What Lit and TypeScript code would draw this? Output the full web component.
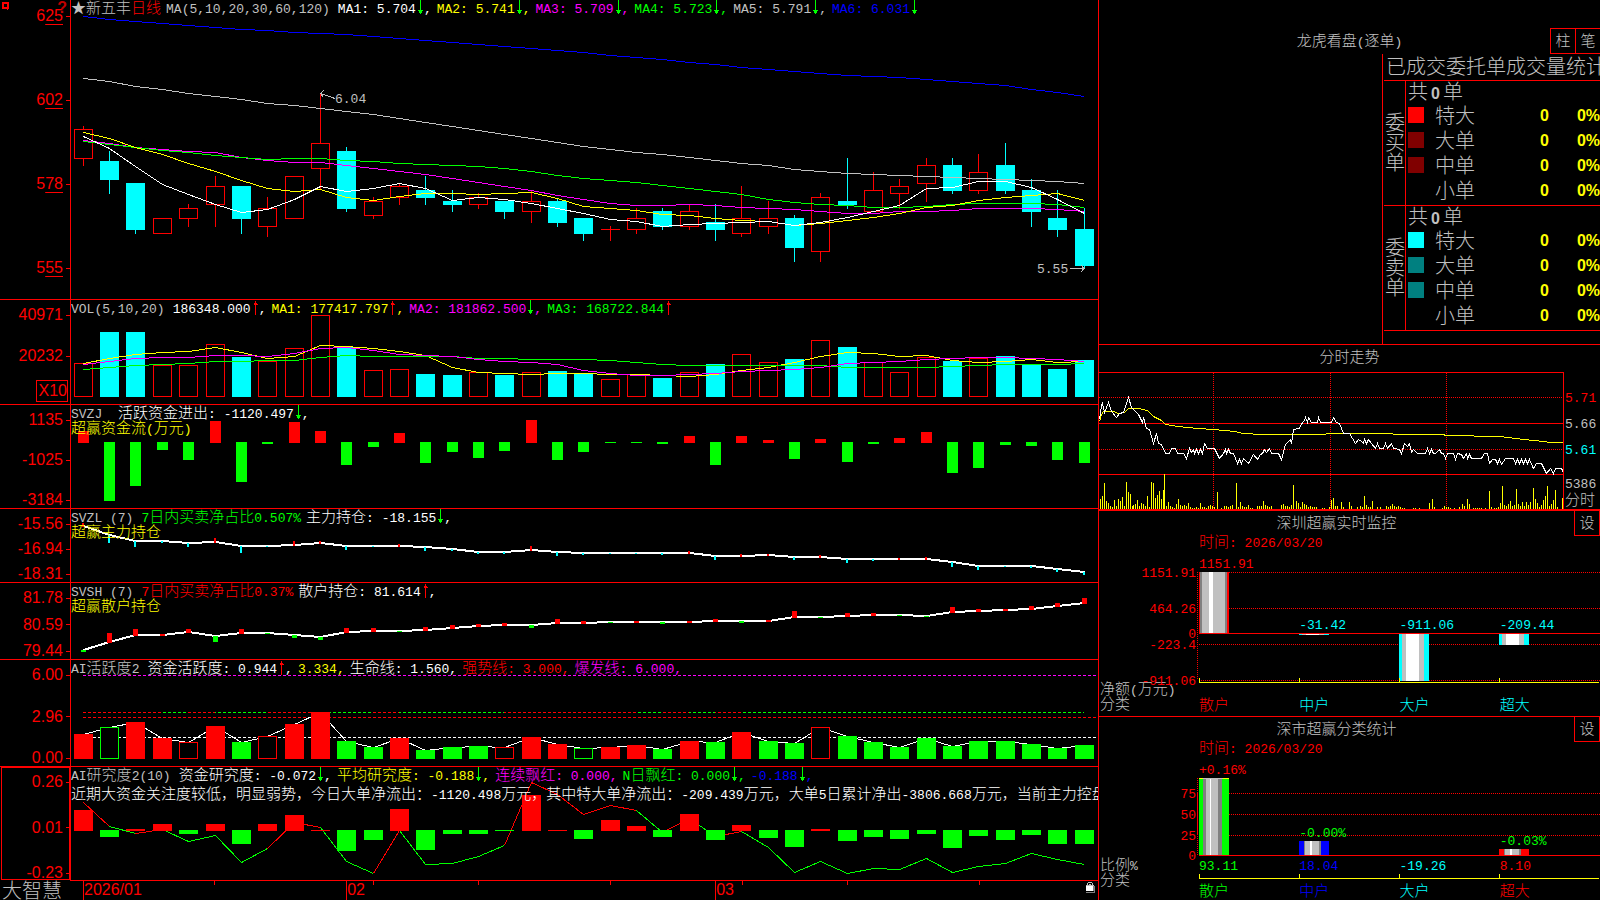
import { LitElement, html, svg, css, nothing } from "lit";
import { customElement, property } from "lit/decorators.js";
import { styleMap } from "lit/directives/style-map.js";

const RED = "#ff0000";
const GREEN = "#00ff00";
const CYAN = "#00ffff";
const YELLOW = "#ffff00";
const MAGENTA = "#ff00ff";
const BLUE = "#0000ff";
const GREY = "#c0c0c0";
const DARK = "#808080";
const WHITE = "#ffffff";

/* Main plots share one coordinate space: x 71..1098, y measured from the top of the window. */
const X0 = 71;
const PLOT_W = 1027;
const cx = (i: number) => Math.floor(83.3 + 26.34 * i);

type Row = { text: string; color: string; arrow?: "up" | "down"; end?: boolean };

/* colour, body top, body bottom, wick top, wick bottom */
const CANDLES: [string, number, number, number, number][] = [
  ["r", 129, 158, 126, 166], ["c", 161, 180, 151, 194], ["c", 183, 230, 183, 234], ["r", 218, 233, 218, 233],
  ["r", 208, 218, 204, 227], ["r", 186, 204, 176, 227], ["c", 186, 219, 186, 234], ["r", 208, 226, 197, 237],
  ["r", 176, 218, 176, 218], ["r", 143, 168, 93, 190], ["c", 151, 209, 147, 212], ["r", 201, 215, 197, 219],
  ["r", 186, 197, 183, 205], ["c", 190, 198, 176, 205], ["c", 201, 205, 190, 212], ["r", 197, 204, 193, 209],
  ["c", 201, 212, 201, 219], ["r", 201, 211, 190, 223], ["c", 201, 223, 198, 227], ["c", 218, 234, 218, 241],
  ["r", 229, 229, 226, 241], ["r", 218, 229, 208, 234], ["c", 211, 227, 208, 230], ["r", 211, 226, 204, 230],
  ["c", 222, 230, 204, 241], ["r", 218, 233, 186, 237], ["r", 218, 226, 201, 234], ["c", 218, 248, 215, 262],
  ["r", 197, 251, 193, 262], ["c", 201, 205, 158, 209], ["r", 190, 211, 172, 211], ["r", 186, 193, 179, 209],
  ["r", 165, 183, 158, 202], ["c", 165, 191, 158, 194], ["r", 172, 190, 154, 194], ["c", 165, 191, 143, 194],
  ["c", 190, 212, 179, 227], ["c", 218, 230, 190, 237], ["c", 229, 266, 208, 268],
];

const MA1 = [136,148,166,184,194,204,212,209,199,186,191,188,183,188,200,197,199,203,208,213,219,221,226,224,223,222,221,225,222,217,211,205,188,187,181,181,187,199,213];
const MA2 = [132,138,147,154,163,171,180,188,191,189,197,200,196,193,193,194,193,192,198,206,208,210,214,215,218,220,221,225,223,220,217,213,207,205,200,197,195,193,200];
const MA3 = [140,143,147,149,151,152,157,160,162,162,165,168,171,174,178,182,186,190,195,199,203,205,205,204,205,207,208,209,211,213,213,211,211,210,208,208,208,209,211];
const MA4 = [141,144,147,150,152,155,157,159,158,158,160,161,163,164,165,166,168,171,175,178,180,182,185,188,191,194,199,202,204,205,207,207,206,204,203,203,203,204,207];
const MA5 = [78,81,86,89,93,96,99,103,105,108,111,114,118,122,126,130,134,138,142,146,149,152,154,157,160,163,165,169,171,173,174,175,176,177,178,179,180,181,183];
const MA6 = [16,19,21,23,25,27,29,30,32,33,34,36,38,40,42,44,46,48,50,52,55,57,59,62,64,67,69,71,73,75,76,77,79,81,83,85,89,92,96];

const VOL = [363,332,332,365,365,344,357,361,348,315,347,370,369,374,375,372,375,372,371,374,379,374,378,372,364,354,362,359,340,347,362,372,357,361,358,356,364,369,360];
const VMA1 = [363,358,354,352,351,347,352,358,356,345,346,348,351,355,367,372,373,374,373,373,374,374,375,376,374,370,367,362,356,352,353,356,355,360,362,361,359,362,361];
const VMA2 = [364,361,358,357,357,355,355,356,353,348,347,350,354,355,356,359,361,362,364,370,373,375,375,374,373,371,370,369,367,363,362,361,359,358,357,357,358,359,361];
const VMA3 = [369,367,365,364,363,361,361,360,360,357,355,356,356,356,356,358,358,359,359,359,360,362,364,365,365,365,365,365,365,367,367,367,367,366,365,364,364,364,363];

/* positive reaches up from the zero line, negative reaches down */
const FLOW = [12,-59,-44,-8,-18,22,-40,-2,21,12,-23,-5,10,-21,-10,-16,-9,23,-18,-10,-1,-1,-2,7,-23,7,3,-17,4,-20,-2,5,11,-31,-26,-3,-4,-18,-21];

const MAIN_POS = [526,535,541,541,543,542,546,546,545,543,546,546,546,547,549,552,552,550,552,553,553,553,553,553,556,556,555,557,557,559,559,559,559,562,566,566,566,569,572];
const MAIN_TICK = [3,-8,-6,-2,-4,4,-7,-1,4,2,-4,-1,2,-4,-2,-2,-2,4,-4,-2,-1,-1,-2,2,-4,2,1,-3,2,-4,-2,1,2,-5,-4,-1,-2,-3,-3];

const RETAIL_POS = [650,642,635,635,632,636,633,633,635,637,632,631,631,630,628,626,625,625,623,623,622,622,622,622,621,621,621,617,617,616,615,615,616,612,611,610,609,606,603];
const RETAIL_TICK = [-2,9,6,1,3,-6,4,-1,-3,-3,4,3,-1,3,3,2,2,-3,4,2,-1,1,-2,1,2,-2,1,6,-1,3,2,-1,-1,5,2,1,3,3,5];

const ACTIVE = [734,727,722,738,742,726,742,736,724,712,741,747,738,750,747,746,747,737,744,748,747,745,749,741,742,732,741,743,727,736,742,747,738,746,741,741,744,748,745];
const ACTIVE_KIND = "RgRRrRGrRRGGRGGGrRRgRRGRGRGGrGGGGGGGGGG";

const STUDY = [21,-7,2,7,-4,7,-14,7,16,1,-21,-10,22,-20,-4,-4,-1,36,1,-9,11,5,-7,17,-10,6,-8,-17,2,-11,-7,-9,-4,-18,-6,-10,-5,-14,-14];
const STUDY_LINE = [802,826,833,829,841,835,862,848,822,827,861,873,830,864,863,856,845,782,794,814,805,810,832,818,836,831,847,872,861,873,868,869,858,872,866,863,853,859,864];
const STUDY_UP = new Set([0, 2, 7, 8, 11, 16, 17, 18, 19, 20, 22, 24]);

/* Intraday panel, in units of a third of a pixel from the panel's origin. */
const AVG_LINE = "27,260 32,240 38,232 70,232 85,236 103,235 115,223 145,223 172,228 190,246 213,258 225,270 260,275 320,283 370,286 435,290 455,298 520,300 700,300 715,298 905,298 910,300 1060,300 1065,304 1148,304 1152,307 1230,307 1300,316 1362,320 1378,325 1420,325";
const PRICE_LINE = "27,255 32,212 37,207 43,235 55,205 62,232 78,250 88,236 100,234 115,190 123,218 135,232 145,240 155,264 160,250 167,282 178,284 190,328 197,298 203,326 213,330 225,358 237,356 243,343 254,343 262,357 278,358 288,373 298,343 304,355 308,346 313,358 319,345 325,358 330,345 336,356 343,328 352,342 372,343 388,373 398,356 404,346 408,358 414,345 420,357 430,356 440,388 446,374 452,386 460,373 474,388 488,360 502,374 510,360 515,357 522,344 528,355 536,343 544,357 564,358 574,374 584,330 600,314 604,326 610,284 626,283 632,266 638,264 644,250 650,263 655,250 662,265 680,265 685,250 691,265 724,265 730,250 738,265 748,266 760,298 778,298 796,328 804,314 812,322 818,328 823,314 829,328 835,314 843,328 854,342 860,328 866,343 878,343 884,328 892,343 902,328 908,342 928,344 934,358 942,328 952,336 957,326 964,355 970,345 980,357 1004,357 1010,343 1016,357 1022,345 1028,358 1036,358 1046,345 1052,356 1058,358 1064,372 1070,358 1088,358 1094,374 1102,358 1112,360 1118,373 1128,358 1132,372 1138,360 1144,373 1174,373 1182,358 1192,358 1198,387 1205,374 1216,374 1222,388 1228,374 1234,390 1244,373 1268,373 1274,387 1280,374 1286,388 1292,374 1298,388 1304,374 1310,388 1318,374 1330,402 1338,388 1354,388 1368,418 1380,403 1390,418 1396,403 1414,403 1420,415";
const scalePoints = (s: string) =>
  s.split(" ").map((p) => {
    const [x, y] = p.split(",").map(Number);
    return `${Math.round(x / 3) + 1090.5},${Math.round(y / 3) + 334.5}`;
  }).join(" ");

/* minute offset in pixels, bar height */
const MINUTE_VOL: [number, number][] = [
  [1,10],[3,13],[5,26],[7,8],[9,6],[11,3],[13,2],[15,9],[17,3],[19,10],[21,8],[23,12],[25,3],[27,27],[29,17],[31,15],[33,3],[34,4],[36,5],[38,9],[40,3],[42,6],[44,5],[46,3],[48,13],[50,2],[52,27],[54,26],[56,11],[58,14],[60,18],[62,10],[64,19],[65,35],[67,3],[69,7],[71,3],[73,2],[75,1],[77,5],[79,10],[81,4],[83,3],[85,4],[87,3],[89,6],[91,2],[93,1],[95,1],[97,2],[99,1],[101,6],[103,2],[105,2],[107,1],[109,3],[111,4],[113,3],[115,2],[118,17],[122,1],[125,3],[127,3],[129,2],[131,3],[133,4],[137,26],[139,2],[141,7],[143,3],[145,2],[147,2],[149,4],[151,1],[153,1],[158,3],[160,3],[162,3],[164,8],[166,4],[168,3],[170,2],[172,3],[182,4],[184,5],[186,3],[188,3],[190,2],[192,4],[194,24],[197,8],[199,6],[201,2],[203,7],[205,5],[207,4],[209,2],[211,3],[213,2],[215,2],[217,2],[223,1],[225,1],[230,2],[232,9],[234,11],[236,3],[238,3],[242,7],[244,2],[250,7],[252,3],[258,2],[261,3],[263,2],[265,13],[267,4],[269,2],[271,2],[273,8],[278,2],[281,2],[287,3],[289,2],[291,3],[293,5],[295,3],[297,2],[299,3],[301,2],[303,1],[305,1],[314,1],[316,1],[320,1],[330,6],[333,10],[335,2],[343,1],[345,3],[347,2],[349,2],[351,1],[355,1],[360,2],[363,5],[365,3],[368,10],[370,5],[374,1],[376,1],[378,1],[380,1],[382,1],[386,1],[390,18],[392,2],[395,1],[397,1],[399,2],[401,6],[403,23],[405,4],[407,3],[409,5],[411,8],[413,3],[415,4],[417,20],[419,5],[421,3],[423,7],[425,3],[427,7],[429,4],[431,7],[434,21],[436,10],[438,6],[440,2],[442,4],[444,9],[446,13],[448,23],[450,3],[452,5],[454,9],[456,19],[458,2],[463,11],
];

/* Chinese runs are set two pixels larger than the monospaced Latin ones. */
const mixed = (s: string) =>
  s.split(/([\u2605\u3000-\u9fff\uff00-\uffef]+)/).filter(Boolean).map((part) =>
    /[\u2605\u3000-\u9fff\uff00-\uffef]/.test(part) ? html`<span class="han">${part}</span>` : part);

const arrow = (dir: "up" | "down") => html`<svg class="arrow" viewBox="0 0 8 15" shape-rendering="crispEdges" aria-hidden="true">
  ${dir === "down"
    ? svg`<path fill="${GREEN}" d="M4 0h1v14h-1zM2 10h5v1h-5zM3 11h3v1h-3zM3 12h3v1h-3z"/>`
    : svg`<path fill="${RED}" d="M4 1h1v14h-1zM2 5h1v-1h1v-1h2v1h1v1zM3 3h3v1h-3z"/>`}
</svg>`;

const line = (ys: number[], color: string, w = 1) => svg`<polyline fill="none" stroke="${color}" stroke-width="${w}"
  vector-effect="non-scaling-stroke" points="${ys.map((y, i) => `${cx(i) + 0.5},${y + (w === 1 ? 0.5 : 0)}`).join(" ")}"/>`;

const box = (x: number, y: number, w: number, h: number, color: string) =>
  svg`<rect x="${x}" y="${y}" width="${w}" height="${h}" fill="${color}"/>`;
const frame = (x: number, y: number, w: number, h: number, color: string) =>
  svg`<rect x="${x + 0.5}" y="${y + 0.5}" width="${w - 1}" height="${Math.max(h - 1, 0.01)}" fill="#000" stroke="${color}"/>`;
const dashed = (x1: number, x2: number, y: number, color: string) =>
  svg`<line x1="${x1}" x2="${x2}" y1="${y + 0.5}" y2="${y + 0.5}" stroke="${color}" stroke-dasharray="3 2" stroke-dashoffset="${(x1 - 83) % 5}"/>`;
const dotted = (x1: number, y1: number, x2: number, y2: number) =>
  svg`<line x1="${x1}" y1="${y1}" x2="${x2}" y2="${y2}" stroke="${RED}" stroke-dasharray="1 1"/>`;

@customElement("app-root")
export class AppRoot extends LitElement {
  @property() date = "2026/03/20";

  static styles = css`
    :host {
      display: block;
      height: 100vh;
      overflow: hidden;
      background: #000;
      color: #c0c0c0;
      font: 13px/15px "Liberation Mono", "Noto Sans CJK SC", monospace;
    }
    * { box-sizing: border-box; }
    h2, p { margin: 0; font: inherit; }
    .han { font-family: "Noto Sans CJK SC", sans-serif; font-size: 15px; font-weight: 300; line-height: 0; }
    .big { font-family: "Noto Sans CJK SC", sans-serif; font-size: 20px; font-weight: 300; }
    .desk { display: grid; grid-template-columns: minmax(0, 1099fr) minmax(0, 501fr); grid-template-rows: minmax(0, 1fr); height: 100%; }

    .main {
      display: grid;
      grid-template-rows: 300fr 105fr 104fr 74fr 77fr 107fr 114fr 19px;
      min-height: 0;
      border-right: 1px solid #f00;
    }
    .pane {
      display: grid;
      grid-template-columns: 71px minmax(0, 1fr);
      grid-template-rows: minmax(0, 1fr);
      min-height: 0;
      border-bottom: 1px solid #f00;
    }
    .pane.last { border-bottom: 0; }
    .axis {
      position: relative;
      display: flex;
      flex-direction: column;
      justify-content: space-between;
      align-items: flex-end;
      padding-top: 7px;
      border-right: 1px solid #f00;
      color: #f00;
      font: 16px/16px "Liberation Sans", sans-serif;
    }
    .axis.price { padding-top: 8px; padding-bottom: 23px; }
    .axis.volume { justify-content: flex-start; padding-bottom: 2px; }
    .axis.volume .mark:first-child { margin-bottom: 25px; }
    .axis.chosen::before { content: ""; position: absolute; inset: 0 0 1px 1px; border: 1px solid #f00; }
    .mark { display: flex; align-items: center; }
    .mark::after { content: ""; width: 4px; height: 1px; margin-left: 3px; background: #f00; }
    .cents { text-decoration: underline 1px; text-underline-offset: 3px; }
    .unit { margin: auto 2px 0 0; padding: 2px 0 2px 2px; border: 1px solid #f00; }
    .corner { position: absolute; left: 2px; top: 2px; width: 8px; height: 8px; }
    .help { position: absolute; right: 3px; top: 0; color: #c00000; font-weight: bold; }

    .plot { position: relative; min-width: 0; overflow: hidden; }
    .plot > svg { position: absolute; inset: 0; width: 100%; height: 100%; }
    .last .plot { border-bottom: 1px solid #f00; }
    .legend { position: relative; display: flex; align-items: flex-start; gap: 5px; height: 15px; line-height: 19px; white-space: pre; }
    .entry { display: flex; align-items: flex-start; }
    .name { margin-right: 3px; }
    .arrow { width: 8px; height: 15px; flex: none; }
    .caption { position: relative; line-height: 19px; white-space: nowrap; }
    .note { position: relative; margin-top: 4px; line-height: 19px; color: #fff; white-space: nowrap; }
    .tag { position: absolute; }

    .foot { display: grid; grid-template-columns: 71px minmax(0, 1fr); }
    .brand { padding-left: 2px; line-height: 18px; white-space: nowrap; }
    .months { position: relative; display: flex; padding-left: 12px; color: #f00; font: 16px/18px "Liberation Sans", sans-serif; }
    .months > svg { position: absolute; inset: 0; width: 100%; height: 4px; }
    .month { flex-basis: 0; border-left: 1px solid #f00; }
    .lock { position: absolute; right: 3px; top: 1px; width: 10px; height: 12px; padding: 0; border: 0; background: none; display: flex; }

    .side { display: grid; grid-template-rows: 345fr 166fr 206fr 183fr; min-height: 0; min-width: 0; }
    .side > section { position: relative; min-height: 0; min-width: 0; overflow: hidden; }
    button { color: inherit; background: #000; border: 1px solid #f00; padding: 3px 0 0; font: inherit; cursor: pointer; }
    .orders { border-bottom: 1px solid #f00; display: flex; flex-direction: column; }
    .bar { display: grid; grid-template-columns: 50px 1fr 50px; padding-top: 28px; align-items: center; text-align: center; }
    .bar h2 { padding-top: 3px; }
    .pair { display: flex; }
    .pair button { width: 26px; height: 26px; margin-right: -1px; flex: none; }
    .book { flex: 1; margin-left: 283px; border-left: 1px solid #f00; padding-left: 1px; white-space: nowrap; }
    .book h2 { height: 26px; line-height: 24px; padding-left: 2px; overflow: hidden; }
    .half { display: grid; grid-template-columns: 22px minmax(0, 1fr); border-top: 1px solid #f00; }
    .half:last-child { border-bottom: 1px solid #f00; }
    .way { display: flex; align-items: center; padding-left: 1px; padding-bottom: 3px; border-right: 1px solid #f00; line-height: 20px; white-space: normal; }
    table { width: 100%; border-collapse: collapse; }
    td, th { height: 25px; padding: 0 0 5px; line-height: 20px; text-align: left; font-weight: inherit; }
    tr:first-child th { height: 24px; padding: 0 0 4px 2px; }
    .total { font: bold 16px/0 "Liberation Sans", sans-serif; padding: 0 3px; }
    .swatch { display: block; width: 16px; height: 16px; margin-left: 2px; }
    .c1 { width: 29px; }
    .c3, .c4 { padding-bottom: 3px; text-align: right; color: #ff0; font: bold 16px/20px "Liberation Sans", sans-serif; }
    .c4 { width: 51px; }

    .intraday { display: grid; grid-template-rows: 27px minmax(0, 1fr); border-bottom: 2px solid #f00; text-align: center; }
    .intraday h2 { line-height: 23px; padding-top: 2px; }
    .tape { display: grid; grid-template-columns: minmax(0, 1fr) 36px; grid-template-rows: minmax(0, 1fr); min-height: 0; text-align: left; }
    .tape .plot { border: 1px solid #f00; border-width: 1px 1px 0 0; }
    .quotes { display: flex; flex-direction: column; padding: 19px 0 0 1px; gap: 11px; }
    .quotes > :nth-child(4) { margin-top: 8px; }
    .quotes > :nth-child(5) { margin-top: -9px; }

    .stats { display: grid; grid-template-columns: 100px minmax(0, 1fr); }
    .stats.first { grid-template-rows: 25px 18px minmax(0, 1fr) 34px; border-bottom: 1px solid #f00; }
    .stats.second { grid-template-rows: 25px 18px minmax(0, 1fr) 45px; }
    .cap { grid-column: 1 / -1; display: grid; grid-template-columns: minmax(0, 1fr) 26px; text-align: center; }
    .cap h2 { line-height: 23px; padding-top: 2px; }
    .cap button { height: 25px; border-top: 0; }
    .when { grid-column: 2; color: #f00; line-height: 16px; }
    .scale, .field { position: relative; }
    .field > svg { position: absolute; inset: 0; width: 100%; height: 100%; }
    .scale span { position: absolute; right: 3px; transform: translateY(-50%); color: #f00; }
    .value { position: absolute; white-space: nowrap; }
    .cats { display: grid; grid-template-columns: repeat(4, minmax(0, 1fr)); align-content: end; row-gap: 11px; }
    .stats.first .cats { padding-bottom: 2px; }
    .ends { display: flex; flex-direction: column; justify-content: space-between; padding: 1px 0 7px 1px; white-space: nowrap; }
    .stats.second .ends { padding: 4px 0 12px 1px; }
  `;

  private legend(name: string, rows: Row[]) {
    return html`<div class="legend">
      <span class="name">${mixed(name)}</span>
      ${rows.map((r) => html`<span class="entry" style=${styleMap({ color: r.color })}><span>${mixed(r.text)}</span>${r.arrow ? html`${arrow(r.arrow)}${r.end ? nothing : ","}` : nothing}</span>`)}
    </div>`;
  }

  private canvas(y: number, h: number, content: unknown) {
    return html`<svg viewBox="${X0} ${y} ${PLOT_W} ${h}" preserveAspectRatio="none" shape-rendering="crispEdges" aria-hidden="true">${content}</svg>`;
  }

  private axis(labels: string[], extra = "") {
    return html`<div class="axis ${extra}">${labels.map((l) => html`<span class="mark">${l}</span>`)}</div>`;
  }

  private pricePane() {
    return html`<section class="pane">
      <div class="axis price">
        ${["625", "602", "578", "555"].map((l) => html`<span class="mark"><span>${l[0]}<span class="cents">${l.slice(1)}</span></span></span>`)}
        <svg class="corner" viewBox="0 0 8 8" shape-rendering="crispEdges" aria-hidden="true"><path fill="${RED}" fill-rule="evenodd" d="M0 0h7v7h-1v1h-1v-1h-5zM2 2v3h3v-3z"/></svg>
        <span class="help">?</span>
      </div>
      <div class="plot">
        ${this.canvas(0, 299, svg`
          ${CANDLES.map(([k, t, b, wt, wb], i) => {
            const x = cx(i), c = k === "r" ? RED : CYAN;
            if (k === "c") return svg`${box(x, wt, 1, wb - wt, c)}${box(x - 9, t, 19, b - t, c)}`;
            if (t === b) return svg`${box(x, wt, 1, wb - wt, c)}${box(x - 9, t, 19, 1, c)}`;
            return svg`${box(x, wt, 1, wb - wt, c)}${frame(x - 9, t, 19, b - t + 1, c)}`;
          })}
          ${line(MA6, BLUE)}${line(MA5, GREY)}${line(MA3, MAGENTA)}${line(MA4, GREEN)}${line(MA2, YELLOW)}${line(MA1, WHITE)}
          <path fill="none" stroke="${GREY}" d="M335 98.5L320.5 93.5L324 90M320.5 93.5L323 97M1070 268.5H1083M1081 265L1084 268.5L1081 272"/>
        `)}
        <div class="legend">
          <span>${mixed("★新五丰")}<span style=${styleMap({ color: RED })}>${mixed("日线")}</span></span>
          <span class="name">MA(5,10,20,30,60,120)</span>
          ${([["MA1: 5.704", WHITE], ["MA2: 5.741", YELLOW], ["MA3: 5.709", MAGENTA], ["MA4: 5.723", GREEN], ["MA5: 5.791", GREY]] as const).map(
            ([t, c]) => html`<span class="entry" style=${styleMap({ color: c })}>${t}${arrow("down")},</span>`)}
          <span class="entry" style=${styleMap({ color: BLUE })}>MA6: 6.031${arrow("down")}</span>
        </div>
        <span class="tag" style=${styleMap({ left: `${(264 / PLOT_W) * 100}%`, top: `${(92 / 299) * 100}%` })}>6.04</span>
        <span class="tag" style=${styleMap({ left: `${(966 / PLOT_W) * 100}%`, top: `${(262 / 299) * 100}%` })}>5.55</span>
      </div>
    </section>`;
  }

  private volumePane() {
    return html`<section class="pane">
      <div class="axis volume"><span class="mark">40971</span><span class="mark">20232</span><span class="unit">X10</span></div>
      <div class="plot">
        ${this.canvas(300, 104, svg`
          ${VOL.map((t, i) => (CANDLES[i][0] === "c" ? box(cx(i) - 9, t, 19, 397 - t, CYAN) : frame(cx(i) - 9, t, 19, 397 - t, RED)))}
          ${line(VMA1, YELLOW)}${line(VMA3, GREEN)}${line(VMA2, MAGENTA)}
        `)}
        ${this.legend("VOL(5,10,20)", [
          { text: "186348.000", color: WHITE, arrow: "up" },
          { text: "MA1: 177417.797", color: YELLOW, arrow: "up" },
          { text: "MA2: 181862.500", color: MAGENTA, arrow: "down" },
          { text: "MA3: 168722.844", color: GREEN, arrow: "up", end: true },
        ])}
      </div>
    </section>`;
  }

  private flowPane() {
    return html`<section class="pane">
      ${this.axis(["1135", "-1025", "-3184"])}
      <div class="plot">
        ${this.canvas(405, 103, svg`${FLOW.map((v, i) => (v > 0 ? box(cx(i) - 5, 443 - v, 11, v, RED) : box(cx(i) - 5, 442, 11, -v, GREEN)))}`)}
        ${this.legend("SVZJ ", [{ text: "活跃资金进出: -1120.497", color: WHITE, arrow: "down" }])}
        <p class="caption" style=${styleMap({ color: YELLOW })}>${mixed("超赢资金流(万元)")}</p>
      </div>
    </section>`;
  }

  private holdingPane(opts: { y: number; h: number; labels: string[]; name: string; caption: string; pos: number[]; tick: number[]; w: number; down: string; rows: Row[] }) {
    return html`<section class="pane">
      ${this.axis(opts.labels)}
      <div class="plot">
        ${this.canvas(opts.y, opts.h, svg`
          ${line(opts.pos, WHITE, 2)}
          ${opts.tick.map((v, i) => {
            const x = cx(i) - (opts.w >> 1), y = opts.pos[i];
            return v > 0 ? box(x, y - v, opts.w, v + 1, RED) : box(x, y, opts.w, -v, opts.down);
          })}
        `)}
        ${this.legend(opts.name, opts.rows)}
        <p class="caption" style=${styleMap({ color: YELLOW })}>${mixed(opts.caption)}</p>
      </div>
    </section>`;
  }

  private activityPane() {
    const greens: [number, number][] = [[3, 4], [5, 7], [9, 11], [12, 16], [21, 22], [23, 24], [25, 38]];
    const reds: [number, number][] = [[0, 3], [4, 5], [7, 9], [11, 12], [16, 21], [22, 23], [24, 25]];
    return html`<section class="pane">
      ${this.axis(["6.00", "2.96", "0.00"])}
      <div class="plot">
        ${this.canvas(660, 106, svg`
          ${dashed(83, 1098, 675, MAGENTA)}${dashed(83, 1098, 717, RED)}${dashed(83, 1098, 737, WHITE)}
          ${reds.map(([a, b]) => dashed(cx(a), cx(b), 712, RED))}${greens.map(([a, b]) => dashed(cx(a), cx(b), 712, GREEN))}
          ${line(ACTIVE, WHITE)}
          ${ACTIVE.map((t, i) => {
            const k = ACTIVE_KIND[i], c = k.toLowerCase() === "r" ? RED : GREEN;
            return k === k.toLowerCase() ? frame(cx(i) - 9, t, 19, 759 - t, c) : box(cx(i) - 9, t, 19, 759 - t, c);
          })}
        `)}
        ${this.legend("AI活跃度2", [
          { text: "资金活跃度: 0.944", color: WHITE, arrow: "up" },
          { text: "3.334,", color: YELLOW },
          { text: "生命线: 1.560,", color: WHITE },
          { text: "强势线: 3.000,", color: RED },
          { text: "爆发线: 6.000,", color: MAGENTA },
        ])}
      </div>
    </section>`;
  }

  private studyPane() {
    return html`<section class="pane last">
      ${this.axis(["0.26", "0.01", "-0.23"], "chosen")}
      <div class="plot">
        ${this.canvas(767, 113, svg`
          ${STUDY_LINE.slice(1).map((y, i) => svg`<line x1="${cx(i) + 0.5}" y1="${STUDY_LINE[i] + 0.5}" x2="${cx(i + 1) + 0.5}" y2="${y + 0.5}" stroke="${STUDY_UP.has(i) ? RED : GREEN}"/>`)}
          ${STUDY.map((v, i) => (v > 0 ? box(cx(i) - 9, 831 - v, 19, v, RED) : box(cx(i) - 9, 830, 19, -v, GREEN)))}
        `)}
        ${this.legend("AI研究度2(10)", [
          { text: "资金研究度: -0.072", color: WHITE, arrow: "down" },
          { text: "平均研究度: -0.188", color: YELLOW, arrow: "down" },
          { text: "连续飘红: 0.000,", color: MAGENTA },
          { text: "N日飘红: 0.000", color: GREEN, arrow: "down" },
          { text: "-0.188", color: BLUE, arrow: "down" },
        ])}
        <p class="note">${mixed("近期大资金关注度较低，明显弱势，今日大单净流出：-1120.498万元，其中特大单净流出：-209.439万元，大单5日累计净出-3806.668万元，当前主力控盘")}</p>
      </div>
    </section>`;
  }

  private footer() {
    return html`<footer class="foot">
      <span class="brand big">大智慧</span>
      <div class="months">
        <svg viewBox="${X0} 0 ${PLOT_W} 4" preserveAspectRatio="none" shape-rendering="crispEdges" aria-hidden="true">
          ${[214, 373, 478, 610, 742, 847, 979].map((x) => box(x, 0, 1, 4, RED))}
        </svg>
        ${([["2026/01", 263], ["02", 369], ["03", 383]] as const).map(([m, w]) => html`<span class="month" style=${styleMap({ flexGrow: w })}>${m}</span>`)}
        <button class="lock" aria-label="锁定"><svg viewBox="0 0 10 12" width="10" height="12" shape-rendering="crispEdges">
          <path fill="${GREY}" d="M3 0h4v1h-4zM2 1h1v2h-1zM7 1h1v2h-1zM4 2h2v1h-2zM1 3h8v1h-8z"/><path fill="${WHITE}" d="M1 4h7v5h-7z"/><path fill="${DARK}" d="M8 4h2v7h-9v-1h8v-1h-1z"/>
        </svg></button>
      </div>
    </footer>`;
  }

  private half(way: string, swatches: string[]) {
    return html`<div class="half">
      <div class="way big">${way}</div>
      <table>
        <tbody>
          <tr><th colspan="4" class="big">共<span class="total">0</span>单</th></tr>
          ${["特大", "大单", "中单", "小单"].map((n, i) => html`<tr>
            <td class="c1">${swatches[i] ? html`<span class="swatch" style=${styleMap({ background: swatches[i] })}></span>` : nothing}</td>
            <th scope="row" class="big">${n}</th><td class="c3">0</td><td class="c4">0%</td>
          </tr>`)}
        </tbody>
      </table>
    </div>`;
  }

  private orders() {
    return html`<section class="orders">
      <div class="bar"><span></span><h2>${mixed("龙虎看盘(逐单)")}</h2>
        <div class="pair"><button>${mixed("柱")}</button><button>${mixed("笔")}</button></div></div>
      <div class="book">
        <h2 class="big">已成交委托单成交量统计</h2>
        ${this.half("委买单", [RED, "#800000", "#800000"])}
        ${this.half("委卖单", [CYAN, "#008080", "#008080"])}
      </div>
    </section>`;
  }

  private intraday() {
    return html`<section class="intraday">
      <h2>${mixed("分时走势")}</h2>
      <div class="tape">
        <div class="plot">
          <svg viewBox="1099 373 464 136" preserveAspectRatio="none" shape-rendering="crispEdges" aria-hidden="true">
            ${dotted(1099, 397.5, 1563, 397.5)}${dotted(1099, 449.5, 1563, 449.5)}
            ${[1213.5, 1330.5, 1446.5].map((x) => dotted(x, 373, x, 509))}
            ${box(1099, 423, 464, 1, RED)}${box(1099, 474, 464, 1, RED)}
            ${MINUTE_VOL.map(([x, h]) => box(1099 + x, 509 - h, 1, h, YELLOW))}
            <polyline fill="none" stroke="${YELLOW}" points="${scalePoints(AVG_LINE)}"/>
            <polyline fill="none" stroke="${WHITE}" points="${scalePoints(PRICE_LINE)}"/>
          </svg>
        </div>
        <div class="quotes">
          <span style=${styleMap({ color: RED })}>5.71</span><span>5.66</span><span style=${styleMap({ color: CYAN })}>5.61</span><span>5386</span><span>${mixed("分时")}</span>
        </div>
      </div>
    </section>`;
  }

  /* A column built of vertical stripes: [width, colour] from left to right. */
  private column(x: number, y: number, h: number, stripes: [number, string][]) {
    let at = x;
    return stripes.map(([w, c]) => {
      const r = box(at, y, w, h, c);
      at += w;
      return r;
    });
  }

  private stats(o: {
    cls: string; title: string; y: number; h: number; labels: [string, number][]; values: [string, number, number, string][];
    grid: number[]; zero: number; body: unknown; cats: [string, string][]; nums?: [string, string][]; ends: string[];
  }) {
    const pct = (y: number) => `${((y - o.y) / o.h) * 100}%`;
    return html`<section class="stats ${o.cls}">
      <div class="cap"><h2>${mixed(o.title)}</h2><button>${mixed("设")}</button></div>
      <p class="when">${mixed(`时间: ${this.date}`)}</p>
      <div class="scale">${o.labels.map(([t, y]) => html`<span style=${styleMap({ top: pct(y) })}>${t}</span>`)}</div>
      <div class="field">
        <svg viewBox="1199 ${o.y} 401 ${o.h}" preserveAspectRatio="none" shape-rendering="crispEdges" overflow="visible" aria-hidden="true">
          ${o.grid.map((y) => dotted(1199, y + 0.5, 1600, y + 0.5))}
          ${dotted(1197.5, o.grid[0], 1197.5, o.grid[o.grid.length - 1])}
          ${box(1199, o.zero, 401, 1, RED)}
          ${o.body}
        </svg>
        ${o.values.map(([t, i, y, c]) => html`<span class="value" style=${styleMap({ color: c, left: `${i * 25}%`, top: `calc(${pct(y)} - 7px)` })}>${t}</span>`)}
      </div>
      <div class="ends">${o.ends.map((e) => html`<span>${mixed(e)}</span>`)}</div>
      <div class="cats">
        ${(o.nums ?? []).map(([t, c]) => html`<span style=${styleMap({ color: c })}>${t}</span>`)}
        ${o.cats.map(([t, c]) => html`<span style=${styleMap({ color: c })}>${mixed(t)}</span>`)}
      </div>
    </section>`;
  }

  private axisLine(y: number, tick: number) {
    return svg`${box(1199, y, 400, 1, YELLOW)}${[0, 1, 2, 3].map((i) => box(1199 + i * 100, y - tick, 1, tick, YELLOW))}`;
  }

  render() {
    const cold: [number, string][] = [[3, CYAN], [4, GREY], [13, WHITE], [5, GREY], [5, CYAN]];
    const tube = (c: string): [number, string][] => [[5, c], [1, DARK], [5, GREY], [2, WHITE], [7, GREY], [2, DARK], [8, c]];
    return html`<div class="desk">
      <main class="main">
        ${this.pricePane()}${this.volumePane()}${this.flowPane()}
        ${this.holdingPane({
          y: 509, h: 73, labels: ["-15.56", "-16.94", "-18.31"], name: "SVZL (7)", caption: "超赢主力持仓",
          pos: MAIN_POS, tick: MAIN_TICK, w: 2, down: CYAN,
          rows: [{ text: "7日内买卖净占比0.507%", color: GREEN }, { text: "主力持仓: -18.155", color: WHITE, arrow: "down" }],
        })}
        ${this.holdingPane({
          y: 583, h: 76, labels: ["81.78", "80.59", "79.44"], name: "SVSH (7)", caption: "超赢散户持仓",
          pos: RETAIL_POS, tick: RETAIL_TICK, w: 5, down: GREEN,
          rows: [{ text: "7日内买卖净占比0.37%", color: RED }, { text: "散户持仓: 81.614", color: WHITE, arrow: "up" }],
        })}
        ${this.activityPane()}${this.studyPane()}${this.footer()}
      </main>
      <aside class="side">
        ${this.orders()}
        ${this.intraday()}
        ${this.stats({
          cls: "first", title: "深圳超赢实时监控", y: 554, h: 128,
          labels: [["1151.91", 573], ["464.26", 609], ["0", 634], ["-223.4", 645], ["-911.06", 681]],
          values: [["1151.91", 0, 564, RED], ["-31.42", 1, 625, CYAN], ["-911.06", 2, 625, CYAN], ["-209.44", 3, 625, CYAN]],
          grid: [572, 608, 644, 680], zero: 633,
          body: svg`
            ${this.column(1199, 572, 61, [[1, RED], [2, DARK], [7, GREY], [4, WHITE], [12, GREY], [2, DARK], [2, RED]])}
            ${this.column(1299, 634, 1, cold)}${this.column(1399, 634, 47, cold)}${this.column(1499, 634, 11, cold)}
            ${this.axisLine(682, 4)}`,
          cats: [["散户", RED], ["中户", CYAN], ["大户", CYAN], ["超大", CYAN]],
          ends: ["净额(万元)", "分类"],
        })}
        ${this.stats({
          cls: "second", title: "深市超赢分类统计", y: 760, h: 95,
          labels: [["75", 794], ["50", 815], ["25", 836], ["0", 856]],
          values: [["+0.16%", 0, 770, RED], ["-0.00%", 1, 833, GREEN], ["-0.03%", 3, 841, GREEN]],
          grid: [793, 814, 835], zero: 855,
          body: svg`
            ${dotted(1197.5, 778, 1197.5, 855)}
            ${this.column(1199, 778, 77, [[4, GREEN], [3, DARK], [4, GREY], [1, WHITE], [7, GREY], [4, DARK], [7, GREEN]])}
            ${this.column(1199, 778, 1, [[4, YELLOW], [20, GREY], [6, YELLOW]])}
            ${this.column(1299, 841, 14, tube(BLUE))}${this.column(1499, 849, 6, tube(RED))}
            ${this.axisLine(878, 4)}`,
          nums: [["93.11", GREEN], ["18.04", BLUE], ["-19.26", CYAN], ["8.10", RED]],
          cats: [["散户", GREEN], ["中户", BLUE], ["大户", CYAN], ["超大", RED]],
          ends: ["比例%", "分类"],
        })}
      </aside>
    </div>`;
  }
}
